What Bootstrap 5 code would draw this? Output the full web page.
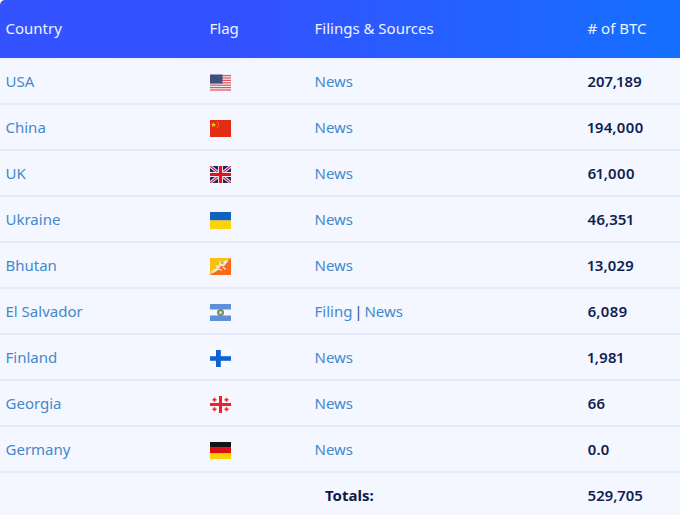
<!doctype html>
<html lang="en">
<head>
<meta charset="utf-8">
<title>Countries holding BTC</title>
<link href="https://cdn.jsdelivr.net/npm/bootstrap@5.3.0/dist/css/bootstrap.min.css" rel="stylesheet">
<style>
html,body{margin:0;background:#fff;overflow:hidden}
body{font-family:"Noto Sans","Open Sans",sans-serif;font-size:15px}
.btc-table{table-layout:fixed;width:680px;margin:0;border-collapse:separate;border-spacing:0;font-size:15px;--bs-table-bg:transparent}
.c1{width:204px}.c2{width:105px}.c3{width:273px}.c4{width:98px}
.btc-table thead tr{background:linear-gradient(90deg,#3552ff 0%,#3451ff 35%,#1570ff 100%)}
.btc-table thead th:first-child{border-top-left-radius:5px}
.btc-table th.hd{height:58px;padding:0 5.5px 2px;font-weight:400;color:#eef3ff;vertical-align:middle;border-bottom:0;box-shadow:none;background:transparent}
.btc-table td{height:46px;padding:0 5.5px;vertical-align:middle;background:#f4f7ff;border-bottom:2px solid #e6eafc;color:#0f1f52;box-shadow:none}
.btc-table tbody tr:first-child td{border-top:2px solid #edf0fd;height:47px}
.btc-table tbody tr:last-child td{border-bottom:0;height:43px;padding-top:2px}
.btc-table a{color:#4488cc;text-decoration:none}
.amt{font-weight:600;color:#101f50;font-variant-numeric:proportional-nums}
.tot{font-weight:700;padding-left:16px!important;color:#0c1b4d!important;text-align:left}
.flag{display:block;width:21px;height:17px;margin-top:2px}
.sep{margin:0 -2px;color:#3a4a85}
</style>
</head>
<body>
<table class="table btc-table">
<colgroup><col class="c1"><col class="c2"><col class="c3"><col class="c4"></colgroup>
<thead><tr><th class="hd">Country</th><th class="hd">Flag</th><th class="hd">Filings &amp; Sources</th><th class="hd"># of BTC</th></tr></thead>
<tbody>
<tr><td><a href="#">USA</a></td><td>
<svg class="flag" viewBox="0 0 21 17"><rect width="21" height="17" fill="#f6eef0"/><g fill="#d9565f"><rect y="1" width="21" height="1.2"/><rect y="3.4" width="21" height="1.2"/><rect y="5.8" width="21" height="1.2"/><rect y="8.2" width="21" height="1.2"/><rect y="10.6" width="21" height="1.2"/><rect y="13" width="21" height="1.2"/><rect y="15.4" width="21" height="1.2"/></g><rect y="0.5" width="12.5" height="9" fill="#3f4f80"/></svg></td><td><a href="#">News</a></td><td class="amt">207,189</td></tr>
<tr><td><a href="#">China</a></td><td>
<svg class="flag" viewBox="0 0 21 17"><rect width="21" height="17" fill="#e32d12"/><polygon points="3.5,2 4.2,4 6.2,4 4.6,5.2 5.2,7 3.5,5.9 1.8,7 2.4,5.2 .8,4 2.8,4" fill="#fbc915"/><g fill="#f6a915"><circle cx="7.4" cy="2" r=".6"/><circle cx="8.6" cy="3.6" r=".6"/><circle cx="8.6" cy="5.6" r=".6"/><circle cx="7.4" cy="7.2" r=".6"/></g></svg></td><td><a href="#">News</a></td><td class="amt">194,000</td></tr>
<tr><td><a href="#">UK</a></td><td>
<svg class="flag" viewBox="0 0 21 17"><rect width="21" height="17" fill="#1d2a6e"/><path d="M0 0 21 17M21 0 0 17" stroke="#f3e6ea" stroke-width="3"/><path d="M0 0 21 17M21 0 0 17" stroke="#d8283c" stroke-width="1.3"/><path d="M10.5 0V17M0 8.500H21" stroke="#f5eef0" stroke-width="5"/><path d="M10.5 0V17M0 8.500H21" stroke="#dc1426" stroke-width="3.2"/></svg></td><td><a href="#">News</a></td><td class="amt">61,000</td></tr>
<tr><td><a href="#">Ukraine</a></td><td>
<svg class="flag" viewBox="0 0 21 17"><rect width="21" height="8.5" fill="#1262bd"/><rect y="8.5" width="21" height="8.5" fill="#fcd500"/></svg></td><td><a href="#">News</a></td><td class="amt">46,351</td></tr>
<tr><td><a href="#">Bhutan</a></td><td>
<svg class="flag" viewBox="0 0 21 17"><polygon points="0,0 21,0 0,17" fill="#fcc010"/><polygon points="21,0 21,17 0,17" fill="#fb6a18"/><path d="M1.500 14.500C4 13.500 5.500 12.500 7 11.500C9 10 8 8 10 7C12 6 12.500 8.500 14.500 6C15.500 4.500 16 3.500 17.500 2.500" stroke="#efe6d8" stroke-width="2.200" fill="none"/><path d="M6 7.500l2 3M9.500 3l1.500 4M13 9l2.500 2.500M3 11l2 1.500M14 3l1 3M9 11l3 1.500" stroke="#f6efe6" stroke-width="1.100"/><circle cx="12" cy="5" r="1" fill="#a89a88"/></svg></td><td><a href="#">News</a></td><td class="amt">13,029</td></tr>
<tr><td><a href="#">El Salvador</a></td><td>
<svg class="flag" viewBox="0 0 21 17"><rect width="21" height="17" fill="#f6f8fc"/><rect width="21" height="5.500" fill="#5c90d8"/><rect y="11.500" width="21" height="5.500" fill="#5c90d8"/><circle cx="10.500" cy="8.500" r="3.500" fill="#6f8f70"/><circle cx="10.500" cy="8.500" r="1.500" fill="#e4d9a0"/></svg></td><td><a href="#">Filing</a> <span class="sep">|</span> <a href="#">News</a></td><td class="amt">6,089</td></tr>
<tr><td><a href="#">Finland</a></td><td>
<svg class="flag" viewBox="0 0 21 17"><rect width="21" height="17" fill="#f8fafd"/><rect x="6" width="4.800" height="17" fill="#0f62d6"/><rect y="6.200" width="21" height="4.600" fill="#0f62d6"/></svg></td><td><a href="#">News</a></td><td class="amt">1,981</td></tr>
<tr><td><a href="#">Georgia</a></td><td>
<svg class="flag" viewBox="0 0 21 17"><rect width="21" height="17" fill="#f8f6f8"/><rect x="9" width="3" height="17" fill="#ee2030"/><rect y="7" width="21" height="3" fill="#ee2030"/><g stroke="#ee2030" stroke-width="1.500"><path d="M2.500 3.800H6.500M4.500 1.800V5.800M14.500 3.800H18.500M16.500 1.800V5.800M2.500 13.200H6.500M4.500 11.200V15.200M14.500 13.200H18.500M16.500 11.200V15.200"/></g></svg></td><td><a href="#">News</a></td><td class="amt">66</td></tr>
<tr><td><a href="#">Germany</a></td><td>
<svg class="flag" viewBox="0 0 21 17"><rect width="21" height="5.700" fill="#141414"/><rect y="5.700" width="21" height="5.700" fill="#dc1010"/><rect y="11.400" width="21" height="5.600" fill="#fcd200"/></svg></td><td><a href="#">News</a></td><td class="amt">0.0</td></tr>
<tr><td></td><td></td><td class="tot">Totals:</td><td class="amt">529,705</td></tr>
</tbody>
</table>
</body>
</html>
